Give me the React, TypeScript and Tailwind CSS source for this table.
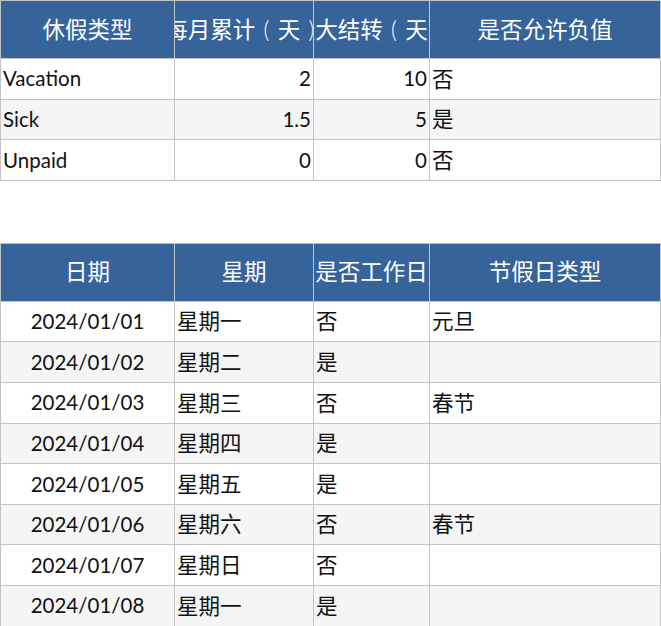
const cols = "grid grid-cols-[174px_139px_116px_231px]";

const leaveRows = [
  { type: "Vacation", monthly: "2", carry: "10", negative: "否" },
  { type: "Sick", monthly: "1.5", carry: "5", negative: "是" },
  { type: "Unpaid", monthly: "0", carry: "0", negative: "否" },
];

const calendarRows = [
  { date: "2024/01/01", week: "星期一", work: "否", holiday: "元旦" },
  { date: "2024/01/02", week: "星期二", work: "是", holiday: "" },
  { date: "2024/01/03", week: "星期三", work: "否", holiday: "春节" },
  { date: "2024/01/04", week: "星期四", work: "是", holiday: "" },
  { date: "2024/01/05", week: "星期五", work: "是", holiday: "" },
  { date: "2024/01/06", week: "星期六", work: "否", holiday: "春节" },
  { date: "2024/01/07", week: "星期日", work: "否", holiday: "" },
  { date: "2024/01/08", week: "星期一", work: "是", holiday: "" },
];

const latin = "font-['Lato','Noto_Sans_CJK_SC',sans-serif] text-[20.5px]";
const cjk = "font-['Lato','Noto_Sans_CJK_SC',sans-serif] text-[21.5px]";
const head = "font-['Lato','Noto_Sans_CJK_SC',sans-serif] text-[22.5px]";

// the header's full-width parentheses sit in the middle of their em box
const P = ({ children }: { children: string }) => (
  <span className="inline-block w-[1em] text-center font-light">{children}</span>
);

const HeaderCell = ({ children }: { children: React.ReactNode }) => (
  <div
    className={`flex h-[58px] items-center justify-center overflow-hidden whitespace-nowrap border-r border-b border-[#c4c4c4] bg-[#36649a] text-white ${head}`}
  >
    <span className="shrink-0">{children}</span>
  </div>
);

const Cell = ({
  children,
  align = "left",
  kind = "latin",
}: {
  children?: string;
  align?: "left" | "right" | "center";
  kind?: "latin" | "cjk";
}) => {
  const justify =
    align === "right" ? "justify-end pr-[2px]" : align === "center" ? "justify-center" : "justify-start pl-[2px]";
  return (
    <div
      className={`flex h-[40.6px] items-center overflow-hidden whitespace-nowrap border-r border-b border-[#c4c4c4] text-[#111] ${justify} ${
        kind === "cjk" ? cjk : latin
      }`}
    >
      {children}
    </div>
  );
};

export default function App() {
  return (
    <div className="w-[661px] h-[626px] overflow-hidden bg-white">
      <div className={`${cols} w-[661px] border-t border-l border-[#c4c4c4]`}>
        <HeaderCell>休假类型</HeaderCell>
        <HeaderCell>
          每月累计<P>(</P>天<P>)</P>
        </HeaderCell>
        <HeaderCell>
          最大结转<P>(</P>天<P>)</P>
        </HeaderCell>
        <HeaderCell>是否允许负值</HeaderCell>
        {leaveRows.map((r, i) => (
          <div key={r.type} className={`contents ${i % 2 === 1 ? "[&>div]:bg-[#f5f5f5]" : "[&>div]:bg-white"}`}>
            <Cell>{r.type}</Cell>
            <Cell align="right">{r.monthly}</Cell>
            <Cell align="right">{r.carry}</Cell>
            <Cell kind="cjk">{r.negative}</Cell>
          </div>
        ))}
      </div>

      <div className={`${cols} mt-[62px] w-[661px] border-t border-l border-[#c4c4c4]`}>
        <HeaderCell>日期</HeaderCell>
        <HeaderCell>星期</HeaderCell>
        <HeaderCell>是否工作日</HeaderCell>
        <HeaderCell>节假日类型</HeaderCell>
        {calendarRows.map((r, i) => (
          <div key={r.date} className={`contents ${i % 2 === 1 ? "[&>div]:bg-[#f5f5f5]" : "[&>div]:bg-white"}`}>
            <Cell align="center">{r.date}</Cell>
            <Cell kind="cjk">{r.week}</Cell>
            <Cell kind="cjk">{r.work}</Cell>
            <Cell kind="cjk">{r.holiday}</Cell>
          </div>
        ))}
      </div>
    </div>
  );
}
